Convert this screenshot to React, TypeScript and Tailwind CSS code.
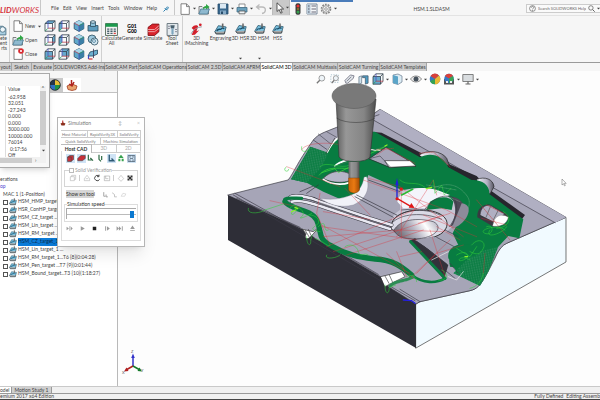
import React from 'react';

const MENUS = ['File', 'Edit', 'View', 'Insert', 'Tools', 'Window', 'Help'];

const RIBBON_TABS = [
    { label: 'yout', width: 'w-[12px]' },
    { label: 'Sketch', width: 'w-[20px]' },
    { label: 'Evaluate', width: 'w-[22px]' },
    { label: 'SOLIDWORKS Add-Ins', width: 'w-[51px]' },
    { label: 'SolidCAM Part', width: 'w-[34px]' },
    { label: 'SolidCAM Operations', width: 'w-[48px]' },
    { label: 'SolidCAM 2.5D', width: 'w-[36px]' },
    { label: 'SolidCAM AFRM', width: 'w-[38px]' },
    { label: 'SolidCAM 3D', width: 'w-[32px]', active: true },
    { label: 'SolidCAM Multiaxis', width: 'w-[45px]' },
    { label: 'SolidCAM Turning', width: 'w-[42px]' },
    { label: 'SolidCAM Templates', width: 'w-[47px]' },
];

const VALUES = ['-62.958', '32.051', '-27.243', '0.000', '0.000', '3000.000', '10000.000', '76014', '0:17:56', 'Off'];

const OPERATIONS = [
    'HSM_HMP_target ...T3',
    'HSR_ConHP_target ...',
    'HSM_CZ_target ...T3',
    'HSM_Lin_target ...T3',
    'HSM_RM_target ...T4',
    'HSM_CZ_target_1 ...',
    'HSM_Lin_target_1 ...',
    'HSM_RM_target_1...T6 {8}(0:04:28)',
    'HSM_Pen_target ...T7 {9}(0:01:44)',
    'HSM_Bound_target...T3 {10}(1:18:27)',
];

interface IconProps {
    className?: string;
    children: React.ReactNode;
}

// Every small icon is drawn on a 12 x 12 grid
const Icon: React.FC<IconProps> = ({ className = 'size-3', children }) => (
    <svg viewBox="0 0 12 12" className={`${className} shrink-0`} fill="none" strokeWidth="0.8" aria-hidden="true">
        {children}
    </svg>
);

const Caret = () => (
    <svg viewBox="0 0 3 3" className="size-[3px] shrink-0" aria-hidden="true">
        <path d="M0 .8h3L1.5 2.4z" fill="#444" />
    </svg>
);

const PageIcon = ({ badge = false }: { badge?: boolean }) => (
    <Icon>
        <path d="M2 .8h5.5l2.8 2.8v7.8H2z" fill="#fff" stroke="#666" />
        <path d="M7.5.8v2.8h2.8" stroke="#666" />
        {badge && (
            <>
                <circle cx="9" cy="3" r="2.8" fill="#d8262c" />
                <path d="M7.9 1.9l2.2 2.2M10.1 1.9L7.9 4.1" stroke="#fff" />
            </>
        )}
    </Icon>
);

const FolderIcon = () => (
    <Icon>
        <path d="M1 3.5h3l1 1h5.5V11H1z" fill="#e9edf0" stroke="#666" />
        <path d="M.8 11l2-5h8.6l-1.8 5z" fill="#8fb9cf" stroke="#4c7c96" />
        <path d="M5 7c0-3 1-4 3-4V1l3.6 3L8 6.6V5C6.500 5 6 5.600 5 7z" fill="#2fa745" />
    </Icon>
);

const SaveIcon = () => (
    <Icon>
        <path d="M1 1h10v10H1z" fill="#39688e" stroke="#274c6b" />
        <path d="M3 1h6v4.500H3z" fill="#dbe9f3" />
        <path d="M3 7.500h6V11H3z" fill="#86abc7" />
        <path d="M4 8.500h2V11H4z" fill="#274c6b" />
    </Icon>
);

const PrintIcon = () => (
    <Icon>
        <path d="M3 1h6v4H3z" fill="#fff" stroke="#777" />
        <path d="M1 4.500h10V9H1z" fill="#6aa1bd" stroke="#446f86" />
        <path d="M3 8h6v2.800H3z" fill="#eef4f7" stroke="#555" />
    </Icon>
);

const UndoIcon = () => (
    <Icon>
        <path d="M4.500 1.500L1.500 4l3 2.500M2 4h5c4.500 0 4.500 5.500 0 6.500" stroke="#bbb" strokeWidth="1.3" />
    </Icon>
);

const PointerIcon = () => (
    <Icon>
        <path d="M3 .8v8.700l2.200-2 1.500 3.700 1.500-.7-1.600-3.500h3z" fill="#fff" stroke="#333" />
    </Icon>
);

const TrafficIcon = () => (
    <Icon>
        <rect x="3.500" y=".3" width="5" height="11.400" rx="2" fill="#3c3c3c" />
        <circle cx="6" cy="3" r="1.500" fill="#e33" />
        <circle cx="6" cy="6" r="1.200" fill="#84722c" />
        <circle cx="6" cy="9" r="1.500" fill="#35a04d" />
    </Icon>
);

const ListIcon = () => (
    <Icon>
        <path d="M1 1h10v10H1z" fill="#f4f6f8" stroke="#5f7285" />
        <path d="M1 1h3.500v10H1z" fill="#b9cbd9" />
        <path d="M5.500 3h4.500M5.500 6h4.500M5.500 9h4.500M2 3h1.500M2 6h1.500M2 9h1.500" stroke="#445" />
    </Icon>
);

const GearIcon = () => (
    <Icon>
        <circle cx="6" cy="6" r="4.500" stroke="#888" strokeWidth="1.600" strokeDasharray="1.800 1" />
        <circle cx="6" cy="6" r="3.300" fill="#f2f2f2" stroke="#888" />
        <circle cx="6" cy="6" r="1.300" fill="#fff" stroke="#888" />
    </Icon>
);

type CubeKind = 'front' | 'back' | 'top' | 'right' | 'left' | 'iso';

const FACES: Record<Exclude<CubeKind, 'iso'>, string> = {
    top: 'M1 3.500L4 .8h7L8.500 3.500z',
    front: 'M1 3.500h7.500v7.700H1z',
    back: 'M4 .8h7v7.400H4z',
    right: 'M8.500 3.500L11 .8v7.400l-2.500 3z',
    left: 'M1 3.500L4 .8v7.400l-3 3z',
};

const CubeIcon = ({ kind }: { kind: CubeKind }) => {
    if (kind === 'iso') {
        return (
            <Icon>
                <path d="M6 .6l4.800 2.500v5.700L6 11.400 1.200 8.800V3.100z" fill="#5fa8cc" stroke="#2b4f63" />
                <path d="M6 .6l4.800 2.500L6 5.600 1.200 3.100z" fill="#a7d5ea" />
                <path d="M6 5.600l4.800-2.500v5.700L6 11.400z" fill="#3b7fa6" />
                <path d="M6 5.600v5.800" stroke="#4b4fbd" />
                <path d="M6 5.600L1.200 3.100" stroke="#b23c4b" />
                <path d="M6 5.600l4.800-2.500" stroke="#2e8c5c" />
            </Icon>
        );
    }
    return (
        <Icon>
            <path d="M1 3.500L4 .8h7v7.400l-2.500 3H1z" fill="#f7fafc" />
            <path d={FACES[kind]} fill="#66a9cc" />
            <path d="M1 3.500L4 .8h7v7.400l-2.500 3H1zM1 3.500h7.500v7.700M8.500 3.500L11 .8" stroke="#33414c" />
            <path d="M4 .8v7.400" stroke="#4b4fbd" />
            <path d="M4 8.200h7" stroke="#c0404c" />
            <path d="M4 8.200l-3 3" stroke="#2e9c5c" />
        </Icon>
    );
};

const CylinderIcon = () => (
    <Icon>
        <path d="M1 5.500h10V11H1z" fill="#5c9dbf" stroke="#2c4c5e" />
        <path d="M3.500 2v4.500h5V2z" fill="#8cc2dc" stroke="#2c4c5e" />
        <ellipse cx="6" cy="2" rx="2.500" ry="1.300" fill="#cbe6f2" stroke="#2c4c5e" />
    </Icon>
);

const SphereIcon = () => (
    <Icon>
        <circle cx="5" cy="5" r="4" fill="#9cc8dd" stroke="#2c4c5e" />
        <circle cx="7.500" cy="7.500" r="3.500" fill="#d7eaf3" stroke="#2c4c5e" />
        <circle cx="7" cy="7" r="1.500" stroke="#4d7f9a" />
    </Icon>
);

const PlaneIcon = () => (
    <Icon>
        <path d="M3 4l7.500-2v4L6 8H1z" fill="#6cb0d0" stroke="#244b60" />
        <path d="M6.500.8V10" stroke="#335" />
        <path d="M1.500 11V7.500" stroke="#3148c9" strokeWidth="1.200" />
        <path d="M1.500 11h4" stroke="#d22f2f" strokeWidth="1.200" />
    </Icon>
);

const CUBES: CubeKind[][] = [
    ['top', 'left', 'iso'],
    ['right', 'left', 'iso'],
    ['front', 'back', 'iso'],
];

const CalcIcon = () => (
    <Icon className="size-[13px]">
        <path d="M.5.5h11v11H.5z" fill="#f4f4f4" stroke="#49604f" />
        <path d="M.5.500h11v3H.5z" fill="#1c9a4d" />
        <path d="M2 5h2v1.200H2zM5 5h2v1.200H5zM8 5h2v1.200H8zM2 7h2v1.200H2zM5 7h2v1.200H5zM8 7h2v1.200H8zM2 9h2v1.200H2zM5 9h2v1.200H5z" fill="#48606a" />
        <path d="M8 9h2v1.200H8z" fill="#d44" />
    </Icon>
);

const BoxIcon = () => (
    <Icon className="size-[13px]">
        <path d="M1 4l4-3h6v7l-4 3.500H1z" fill="#d9242c" stroke="#7c1015" />
        <path d="M1 6h6l4-3.500M1 8h6l4-3" stroke="#f4b6b8" />
    </Icon>
);

const ToolSheetIcon = () => (
    <Icon className="size-[13px]">
        <path d="M1 .5h10v11H1z" fill="#e5ebef" stroke="#5c6a73" />
        <path d="M4 2h4l-.5 3h-3z" fill="#49606e" />
        <path d="M5 5h2v5l-1 1-1-1z" fill="#7da6bf" />
        <path d="M2 3h1.500M2 5h1.500M8.500 6H10M8.500 8H10" stroke="#667" />
    </Icon>
);

const IMachiningIcon = () => (
    <Icon className="size-[13px]">
        <path d="M1.500 4.500C4 1 7 2 7.500 3L6 7.500l2.500-.7-4 4L1.500 11l2-4.500z" fill="#d3202b" />
        <circle cx="9.500" cy="1.700" r="1.300" fill="#d3202b" />
        <path d="M1 10c2-4 5-6 10-6.500" stroke="#8e99a3" />
    </Icon>
);

const MillIcon = ({ className = 'size-3' }: { className?: string }) => (
    <Icon className={className}>
        <path d="M.8 8L4 2.500l7.200 1.200L9.500 10H2z" fill="#7cc2e0" stroke="#2c5970" />
        <path d="M2.500 7.500c1.500-3 3-1 4-2s2-1 3 0" stroke="#174b66" strokeWidth="1.200" />
        <path d="M.8 8L2 10h7.500l.5-2.200" fill="#a8a8a8" stroke="#444" />
        <path d="M8 .5v4" stroke="#666" strokeWidth="1.500" />
    </Icon>
);

const TopBar = () => (
    <header className="flex h-4 shrink-0 items-center overflow-hidden border-b border-[#e3e3e3] bg-[#f6f6f6]">
        <div className="flex h-full w-[41px] shrink-0 items-center border-r border-[#c8c8c8] pt-[5px] text-[8px] leading-none text-[#d5323b]">
            <span className="font-bold italic">LID</span>
            <span className="italic">WORKS</span>
        </div>
        <nav className="flex w-[116px] shrink-0 items-center justify-between pt-0.5 pl-[10px]">
            {MENUS.map((menu) => (
                <button key={menu} type="button">{menu}</button>
            ))}
        </nav>
        <div className="flex h-full w-[18px] shrink-0 items-center justify-center border-r border-[#c8c8c8] pt-0.5">
            <Icon className="size-[6px]">
                <path d="M1 11l4-4M3.500 4.500l4 4M5 6l4-4.500 2 2L7 8z" stroke="#2a7fae" strokeWidth="2" />
            </Icon>
        </div>
        <div className="flex shrink-0 items-center gap-[2px] pt-0.5 pl-1">
            <button type="button" aria-label="New document" className="flex items-center gap-[2px]"><PageIcon /><Caret /></button>
            <button type="button" aria-label="Open document" className="flex items-center gap-[2px]"><FolderIcon /><Caret /></button>
            <button type="button" aria-label="Save" className="flex items-center gap-[2px]"><SaveIcon /><Caret /></button>
            <button type="button" aria-label="Print" className="flex items-center gap-[2px]"><PrintIcon /><Caret /></button>
            <button type="button" aria-label="Undo" className="flex items-center gap-[2px]"><UndoIcon /><Caret /></button>
        </div>
        <button type="button" aria-label="Select" className="flex h-full w-[18px] shrink-0 items-center justify-center border-x border-[#bbb] bg-[#c9c9c9]"><PointerIcon /><Caret /></button>
        <div className="flex shrink-0 items-center gap-[2px] pt-0.5 pl-[2px]">
            <button type="button" aria-label="Rebuild"><TrafficIcon /></button>
            <button type="button" aria-label="File properties"><ListIcon /></button>
            <button type="button" aria-label="Options" className="flex items-center gap-[2px]"><GearIcon /><Caret /></button>
        </div>
        <div className="flex h-full min-w-0 flex-1 flex-col">
            <span className="-ml-[46px] h-[2px] w-[62px] bg-[#4a7cba]" />
            <span className="pt-[4px] text-center">HSM.1.SLDASM</span>
        </div>
        <label className="mt-0.5 flex h-[9px] w-[74px] shrink-0 items-center gap-[2px] border border-r-0 border-[#ccc] bg-[#fafafa] pl-[2px] text-[4px]">
            <Icon className="size-[7px]">
                <circle cx="6" cy="6" r="5" stroke="#666" strokeWidth="1.200" />
                <path d="M4 4.500c0-2.500 4-2.500 4 0C8 6 6 6 6 7.500M6 8.500V10" stroke="#666" strokeWidth="1.200" />
            </Icon>
            <input aria-label="Search" placeholder="Search SOLIDWORKS Help" className="min-w-0 flex-1 bg-transparent outline-none placeholder:text-[#666]" />
            <Icon className="size-[7px]">
                <circle cx="5" cy="5" r="3.800" stroke="#555" strokeWidth="1.200" />
                <path d="M8 8l3.500 3.500" stroke="#555" strokeWidth="1.600" />
            </Icon>
            <Caret />
        </label>
    </header>
);

interface RibbonButtonProps {
    width: string;
    lines: string[];
    children: React.ReactNode;
}

const RibbonButton: React.FC<RibbonButtonProps> = ({ width, lines, children }) => (
    <button type="button" className={`flex ${width} shrink-0 flex-col items-center`}>
        <span className="flex h-[14px] items-center">{children}</span>
        {lines.map((line) => (
            <span key={line} className="h-[5px] leading-[5px] whitespace-nowrap">{line}</span>
        ))}
    </button>
);

const Ribbon = () => (
    <div className="flex h-[46px] shrink-0 overflow-hidden bg-[#f6f6f6]">
        <button type="button" className="flex w-[10px] shrink-0 flex-col items-end border-r border-[#d0d0d0] pt-[7px] pr-[2px]">
            <Icon className="size-[13px]">
                <path d="M1 3h7l3 2v6H1z" fill="#a9cfe2" stroke="#4b6f83" />
                <circle cx="8" cy="6" r="2.500" fill="#eef6fa" stroke="#4b6f83" />
            </Icon>
            <span className="h-[5px] leading-[5px]">ete</span>
            <span className="h-[5px] leading-[5px]">ent</span>
            <span className="h-[5px] leading-[5px]">rts</span>
        </button>
        <div className="flex w-[34px] shrink-0 flex-col gap-[2px] pt-[4px] pl-[2px]">
            <button type="button" className="flex items-center gap-px"><PageIcon /><span className="w-[12px] text-left">New</span><Caret /></button>
            <button type="button" className="flex items-center gap-px"><FolderIcon />Open</button>
            <button type="button" className="flex items-center gap-px"><PageIcon badge />Close</button>
        </div>
        <div className="grid w-[58px] shrink-0 grid-cols-4 content-start gap-y-[2px] border-r border-[#d0d0d0] pt-[4px]">
            {CUBES.map((row, r) => (
                <React.Fragment key={r}>
                    {row.map((kind, c) => (
                        <button key={c} type="button" aria-label={`View ${kind}`}><CubeIcon kind={kind} /></button>
                    ))}
                    <button type="button" aria-label="Section view">
                        {r === 0 ? <CylinderIcon /> : r === 1 ? <SphereIcon /> : <PlaneIcon />}
                    </button>
                </React.Fragment>
            ))}
        </div>
        <div className="flex w-[81px] shrink-0 border-r border-[#d0d0d0] pt-[6px]">
            <RibbonButton width="w-[19px]" lines={['Calculate', 'All']}><CalcIcon /></RibbonButton>
            <RibbonButton width="w-[22px]" lines={['Generate']}>
                <span className="text-[5px] leading-[5px] font-black text-black">G01<br />G00</span>
            </RibbonButton>
            <RibbonButton width="w-[20px]" lines={['Simulate']}><BoxIcon /></RibbonButton>
            <RibbonButton width="w-[18px]" lines={['Tool', 'Sheet']}><ToolSheetIcon /></RibbonButton>
        </div>
        <div className="flex pt-[6px]">
            <RibbonButton width="w-[27px]" lines={['3D', 'iMachining']}><IMachiningIcon /></RibbonButton>
            <RibbonButton width="w-[21px]" lines={['Engraving']}><MillIcon className="size-[13px]" /></RibbonButton>
            <div className="flex flex-col items-center justify-between pb-[2px]">
                <RibbonButton width="w-[19px]" lines={['3D HSR']}><MillIcon /></RibbonButton>
                <Caret />
            </div>
            <div className="flex flex-col items-center justify-between pb-[2px]">
                <RibbonButton width="w-[19px]" lines={['3D HSM']}><MillIcon /></RibbonButton>
                <Caret />
            </div>
            <RibbonButton width="w-[17px]" lines={['HSS']}><MillIcon /></RibbonButton>
        </div>
    </div>
);

const RibbonTabs = () => (
    <div className="flex h-[9px] shrink-0 overflow-hidden border-t border-[#9a9a9a] bg-[#f6f6f6]">
        {RIBBON_TABS.map((tab) => (
            <button
                key={tab.label}
                type="button"
                className={`${tab.width} shrink-0 border-r border-[#a5a5a5] whitespace-nowrap ${tab.active ? 'bg-white text-black' : 'bg-[#cecece]'}`}
            >
                {tab.label}
            </button>
        ))}
    </div>
);

const FeatureTree = () => (
    <aside className="flex w-[118px] shrink-0 flex-col overflow-hidden border-r border-[#b9b9b9] bg-white">
        <div className="flex h-[22px] shrink-0 items-end border-b border-[#c2c2c2] bg-[#f6f6f6] pl-[46px]">
            <button type="button" aria-label="Appearances" className="flex h-[14px] w-[17px] items-center justify-center bg-[#c9c9c9]">
                <Icon>
                    <circle cx="6" cy="6" r="5.300" fill="#2f6fc4" />
                    <path d="M6 6V.7A5.300 5.300 0 0 1 11.300 6z" fill="#e7bd33" />
                    <path d="M6 6h5.300A5.300 5.300 0 0 1 6 11.300z" fill="#1f9245" />
                    <path d="M6 6H.7A5.300 5.300 0 0 1 6 .7z" fill="#27364a" />
                    <circle cx="6" cy="6" r="5.300" stroke="#222" />
                </Icon>
            </button>
            <button type="button" aria-label="SolidCAM manager" className="flex h-[14px] w-[18px] items-center justify-center bg-white">
                <Icon>
                    <path d="M1 7l5-2 5 2-1 3.500-4 1-4-1z" fill="#e7a26c" stroke="#a33c20" />
                    <path d="M5.500 1v5M8 3L6 7 3 5" stroke="#b0221c" strokeWidth="1.500" />
                </Icon>
            </button>
        </div>
        <div className="flex flex-col pt-[82px] whitespace-nowrap">
            <span className="h-[8px] leading-[8px]">erations</span>
            <span className="h-[7px] leading-[7px] text-[#4b3fd0]">op</span>
            <span className="h-[8px] pl-[3px] leading-[8px]">MAC 1 (1-Position)</span>
            <ul className="flex h-[75px] flex-col pl-[3px]">
                {OPERATIONS.map((name, i) => (
                    <li key={name} className="flex-1">
                        <label className="flex h-full items-center">
                            <input type="checkbox" className="size-[5px] shrink-0 appearance-none border border-[#555] bg-white" />
                            <MillIcon className="ml-px size-[8px]" />
                            <span className={`ml-px h-full ${i === 5 ? 'w-[44px] bg-[#0b7bd8] text-[#0a2c4d]' : ''}`}>{name}</span>
                        </label>
                    </li>
                ))}
            </ul>
        </div>
    </aside>
);

// Coordinates are window units; the part itself is drawn at three times that scale
const PartView = () => (
    <svg viewBox="118 71 482 315" preserveAspectRatio="xMidYMid slice" className="absolute inset-0 size-full" role="img" aria-label="Machined part">
        <defs>
            <linearGradient id="holder" x1="0" x2="1">
                <stop offset="0" stopColor="#5e5e5e" />
                <stop offset=".25" stopColor="#979797" />
                <stop offset=".7" stopColor="#858585" />
                <stop offset="1" stopColor="#4c4c4c" />
            </linearGradient>
            <linearGradient id="cutter" x1="0" x2="1">
                <stop offset="0" stopColor="#c96309" />
                <stop offset=".5" stopColor="#ea7a12" />
                <stop offset="1" stopColor="#a34a02" />
            </linearGradient>
            <linearGradient id="bowl" x1="0" x2="1" y1=".3" y2="0">
                <stop offset="0" stopColor="#77757f" />
                <stop offset=".35" stopColor="#b5b4c2" />
                <stop offset=".65" stopColor="#ffffff" />
                <stop offset="1" stopColor="#a5a4b3" />
            </linearGradient>
            <linearGradient id="wall" x1="0" x2="1">
                <stop offset="0" stopColor="#f4f4fa" />
                <stop offset=".6" stopColor="#b2b1c2" />
                <stop offset="1" stopColor="#55535f" />
            </linearGradient>
            <pattern id="hatch" width="5" height="5" patternUnits="userSpaceOnUse" patternTransform="rotate(8)">
                <rect width="5" height="5" fill="#087c41" />
                <path d="M0 2h3" stroke="#7fae9a" strokeWidth="1" />
            </pattern>
        </defs>
        <g transform="translate(290 130) scale(.33333)" fill="none" strokeLinejoin="round" strokeLinecap="round">
            <path d="M-186 195L-186 330 378 654V522L295 468C288 445 275 448 272 440L75 325C65 305 45 303 38 298z" fill="#2e2e37" />
            <path d="M378 522L390 515 540 482C575 475 590 430 615 385C630 350 635 348 650 340L828 262V396L378 654z" fill="#f1faff" stroke="#333" strokeWidth="2" />
            <path d="M-186 195L-6 150C8 135 20 100 70 30C85 12 100 8 140 -8L245 -45 270 -62 828 262 650 340C625 350 610 395 590 430C570 470 560 477 540 482L390 515 378 522 295 470 272 440 75 325 38 298z" fill="#a6a5b7" stroke="#34333c" strokeWidth="2" />
            <path d="M245 -35L270 -62 828 262 795 278 250 -30z" fill="#b0afc2" />
            <path d="M250 -30L795 278M245 -38l22-8M70 30l40 28M-170 195L375 512M-165 190L60 315M95 333l170 100M330 478l60 37M440 400l55 45M-160 205L30 292" stroke="#3b3a45" strokeWidth="2" />
            <path d="M110 5L145 25M85 12l50 40" stroke="#4c4b58" strokeWidth="2" />

            {/* far pocket walls */}
            <path d="M245 5L275 8 405 75 460 95 560 138 600 180 705 255 690 275 590 215 545 170 470 120 400 100 260 35z" fill="#27262d" />
            <path d="M388 75C410 58 455 62 470 85L478 105 440 115z" fill="url(#wall)" stroke="#222" strokeWidth="2" />
            <path d="M560 148C585 138 610 148 612 170L600 192 570 180z" fill="url(#wall)" stroke="#222" strokeWidth="2" />

            {/* roughing pass */}
            <path d="M108 68C130 30 150 8 200 5L255 5 390 82C420 65 460 75 475 112L545 150C575 148 600 165 598 192L700 268 688 325 655 318 625 350 590 380 550 420 480 410 475 375 505 345 488 310 510 265 495 225 450 205 405 185 330 178 235 135 225 165 200 195 150 207 100 185 50 158 3 148 60 50z" fill="#087c41" />
            <path d="M3 148L62 50 115 68 95 112 50 158z" fill="url(#hatch)" />
            <path d="M550 370L625 350 595 425 570 468 490 430z" fill="url(#hatch)" />
            <path d="M112 66C128 32 150 12 185 8" stroke="#fff" strokeWidth="5" />
            <path d="M108 70L134 25" stroke="#333" strokeWidth="2" />

            {/* small island next to the cutter */}
            <path d="M100 145C125 118 165 118 192 140C190 158 130 165 100 145z" fill="#b6b5c8" stroke="#333" strokeWidth="2" />
            <path d="M100 148C130 168 175 166 192 148" stroke="#fff" strokeWidth="5" />
            <path d="M135 108C150 90 190 90 205 75C225 55 255 60 270 60" stroke="#fff" strokeWidth="5" />
            <path d="M132 112C150 95 195 98 210 80M230 66L285 50" stroke="#2b7d4e" strokeWidth="3" />
            <path d="M88 135C120 95 180 130 195 105C215 75 250 70 288 48M95 128l40-12 10 12 40-20" stroke="#3fe03c" strokeWidth="2" />

            {/* rectangular island */}
            <path d="M238 86L288 52 345 85 378 108 300 112z" fill="#a6a5b8" stroke="#26252c" strokeWidth="2" />
            <path d="M285 92L360 92 378 108 298 112z" fill="#fff" stroke="#333" strokeWidth="2" />
            <path d="M238 86L270 78 300 110" stroke="#4a4955" strokeWidth="2" />

            {/* right island */}
            <path d="M562 262C560 235 580 222 600 224L650 252C668 265 640 292 610 290z" fill="#3a3942" />
            <path d="M570 255C572 232 585 224 600 226L645 252 610 275z" fill="#b0afc2" stroke="#333" strokeWidth="2" />
            <path d="M612 272C618 255 640 250 655 262C650 285 625 292 608 288z" fill="#fff" stroke="#777" />
            <path d="M602 228l-14 34M625 240l-15 30" stroke="#555" strokeWidth="2" />

            {/* centre bowl */}
            <path d="M330 185C390 160 470 180 500 225C515 260 490 290 470 305L400 320 310 300C300 270 305 255 330 240z" fill="#c5c4d4" />
            <path d="M322 215C325 180 400 160 455 185L480 195 440 210 410 235 340 235z" fill="#f4f4fb" />
            <path d="M420 215C450 195 480 200 490 215L485 240 455 235 408 240z" fill="#087c41" />
            <path d="M485 200C535 205 540 270 480 290C500 260 500 230 485 200z" fill="#4c4856" />
            <path d="M515 220C560 225 525 290 485 295z" fill="#8d8b9b" />
            <path d="M303 295C300 262 340 238 400 240C455 242 485 270 465 300C440 335 340 340 303 295z" fill="#dadae6" stroke="#333" strokeWidth="3" />
            <path d="M312 300C330 268 380 262 430 275C460 290 440 318 395 325C355 330 320 325 312 300z" fill="url(#bowl)" stroke="#44434e" strokeWidth="2" />
            <path d="M310 270C330 240 400 230 450 255M305 280C330 250 400 245 455 268M405 238C430 200 470 190 492 205C510 230 495 270 478 290M335 240L380 236" stroke="#3a3944" strokeWidth="2" />

            {/* rib running across the part */}
            <path d="M0 202C10 192 60 200 90 215L240 265 305 285M5 215C40 205 90 230 240 278L300 297" stroke="#33323b" strokeWidth="11" />
            <path d="M0 202C10 192 60 200 90 215L240 265 305 285M5 215C40 205 90 230 240 278L300 297" stroke="#e9e9f2" strokeWidth="8" />
            <path d="M20 203C60 205 100 222 240 271L304 291" stroke="#55545f" strokeWidth="2" />
            <path d="M230 140C240 175 232 205 190 225C150 235 120 225 90 205C130 212 165 205 195 190C215 175 220 155 222 142z" fill="#f1f1f8" stroke="#77768a" />
            <path d="M200 195L320 255M195 200L310 262M235 150L330 185M50 190L85 165M30 185L70 168" stroke="#34333d" strokeWidth="2" />

            {/* V groove */}
            <path d="M358 332L375 325 475 405 462 448z" fill="#33323b" />
            <path d="M375 330L475 395 500 360 430 320z" fill="#9f9eb0" />
            <path d="M382 335L470 402M440 322l60 32M465 300l40 20M480 400l25 30" stroke="#3b3a45" strokeWidth="2" />
            <path d="M475 385C470 355 500 335 540 345L570 360C570 385 540 372 515 395L500 425z" fill="#087c41" />
            <path d="M425 390l50-25M475 440l25 10 20-25" stroke="#eee" strokeWidth="2" />

            {/* near-edge notches */}
            <path d="M38 298L70 305 90 290 60 322C50 330 42 325 48 312z" fill="#fff" stroke="#333" strokeWidth="2" />
            <path d="M45 300l12 20M55 298l8 18" stroke="#444" strokeWidth="2" />
            <path d="M272 440L335 425 345 440 300 462 285 470z" fill="#fff" stroke="#333" strokeWidth="2" />
            <path d="M285 438l12 22M298 435l10 22" stroke="#444" strokeWidth="2" />

            {/* finishing pass along the near edge */}
            <path d="M-15 215C0 240 60 235 80 270C98 310 80 325 125 348C175 378 215 382 255 387C310 390 335 410 365 435" stroke="#087c41" strokeWidth="16" />
            <path d="M-15 215C-25 200 10 205 35 205" stroke="#087c41" strokeWidth="10" />
            <path d="M365 435C400 462 440 460 465 445" stroke="#087c41" strokeWidth="8" />
            <path d="M465 445L362 335" stroke="#087c41" strokeWidth="9" />
            <path d="M300 468C320 450 345 455 370 440" stroke="#2c8d55" strokeWidth="9" strokeDasharray="3 1" />

            {/* rapid moves */}
            <path d="M35 60C40 38 120 35 150 45M-10 110L150 170M260 75L290 55 375 100M-60 212L30 232M90 190L80 250 120 345M95 285L360 430M95 290L380 330M100 320L330 300 460 305M110 350L420 220M130 365L300 310 480 250M170 375L400 300M290 370L370 445M330 380L395 365M220 150L470 240 560 290M235 145L330 170 520 320M320 320L430 150 440 195M350 440L320 365M365 440L480 330M380 430L440 370 520 345M334 185V325M585 370L580 430M400 255L560 320M440 290L510 330M575 265L650 285M385 280L460 255M465 440L420 300M100 245L240 268M240 255L165 175" stroke="#dd3038" strokeWidth="2" strokeOpacity=".55" />
            <path d="M388 70L430 66 480 110M590 225L640 250M260 60L310 55M560 210L660 330" stroke="#c43a3a" strokeWidth="2" strokeDasharray="4 3" strokeOpacity=".8" />

            {/* lead-in and lead-out moves */}
            <path d="M-125 235C-130 255-90 250-75 240L-20 222M35 50C30 72 55 65 60 55M-12 112a6 6 0 1 0 8 6M0 235c10-15 25-10 20 5s-25 20-10 0 40 10 25 20 15 0 30-10M60 255c20 0 35 20 20 30s-20 15 10 20M50 320c0 30 15 30 12 10l5-15M75 325c30 10 40 30 45 20M110 375c-10 15 30 10 40 0M165 350c15-10 35-5 40 15s20 0 30 10M85 290c30-30 10 20 30 10M285 465c0 35 15 25 12 8l20-8M350 440c15-10 30 0 30 15M455 420c25 10 15 35-10 30M500 375c30-20 45 5 20 15s-10-20 20 0M545 345c20-25 45-10 35 10s-20 20-40 10M590 290c25-10 20 30-5 20s40-30 60-10M640 245c35 20 10 50-20 50M330 150c20 20 50 0 75 22M430 150l5 40 20-25 8 30 20-20M90 110c20-20 60 10 90-5M600 300c-20 30 40 10 50-10M540 475c20-5 35-20 40-45M500 355l40 25 20-30" stroke="#32d23a" strokeWidth="2" strokeOpacity=".8" />
            <path d="M430 175c40-20 70-10 90 10s20 30 15 50M410 165l90 15M440 185l70 30" stroke="#a0c8a8" strokeWidth="1" strokeDasharray="1 3" />
            <path d="M5 245l12-5M15 232l8 4M525 380l8 0M285 48l6-3M425 172l-16 4" stroke="#8df02a" strokeWidth="4" />
            <path d="M340 510l25 2 10 8" stroke="#241fe0" strokeWidth="4" />

            {/* machine origin */}
            <path d="M321 205V160" stroke="#2020d8" strokeWidth="4" />
            <path d="M316 166l5-22 5 22z" fill="#2020d8" />
            <path d="M321 205L362 229" stroke="#e01818" strokeWidth="4" />
            <path d="M356 233l18 1-10-15z" fill="#e01818" />
            <path d="M335 195L368 178" stroke="#2bb832" strokeWidth="5" />
            <circle cx="321" cy="206" r="4.500" fill="#e01818" />
            <path d="M329 173h9v9h-9z" fill="#e01818" />
        </g>

        {/* tool holder */}
        <path d="M336 99L339 157C343 163 367 163 370 157L376 99z" fill="url(#holder)" stroke="#333" strokeWidth=".6" />
        <path d="M336.500 118C345 124 367 124 375 118" fill="none" stroke="#333" strokeWidth=".5" />
        <ellipse cx="354" cy="96" rx="22" ry="12.500" fill="#797979" stroke="#555" strokeWidth=".5" />
        <path d="M348.500 162h11v16h-11z" fill="url(#holder)" />
        <path d="M348.500 178h11v12c-2 4-9 4-11 0z" fill="url(#cutter)" stroke="#703300" strokeWidth=".4" />

        {/* triad */}
        <g fill="none" strokeWidth="1.500">
            <path d="M133 366V357" stroke="#3232c8" />
            <path d="M131.200 358l1.800-4.500 1.800 4.500z" fill="#3232c8" />
            <path d="M133 366l-7 4" stroke="#b02020" />
            <path d="M126.500 367.500l-2.500 4 4.500-.5z" fill="#b02020" />
            <path d="M133 366l7 4" stroke="#157a2a" />
            <path d="M139.500 367.500l2.500 4-4.500-.5z" fill="#157a2a" />
        </g>
        <g fontSize="4" fill="#555">
            <text x="131" y="353">Z</text>
            <text x="122" y="374">X</text>
            <text x="141" y="372">Y</text>
        </g>
        <path d="M562 179v6l1.500-1.300 1 2.200.8-.4-1-2.100h1.900z" fill="#fff" stroke="#666" strokeWidth=".5" />
    </svg>
);

const ViewToolbar = () => (
    <div className="absolute top-[2px] left-[198px] flex items-center">
        <button type="button" aria-label="Zoom to fit" className="w-[14px]">
            <Icon className="size-[10px]"><circle cx="7" cy="5" r="3.500" fill="#eef4f8" stroke="#777" /><path d="M4.500 7.500L1 11" stroke="#777" strokeWidth="1.600" /></Icon>
        </button>
        <button type="button" aria-label="Zoom to area" className="w-[14px]">
            <Icon className="size-[10px]"><path d="M1 1h9v9H1z" stroke="#8ab" strokeDasharray="1.500 1.500" /><circle cx="7" cy="5" r="3" fill="#eef4f8" stroke="#777" /><path d="M5 7.500L2 11" stroke="#777" strokeWidth="1.500" /></Icon>
        </button>
        <button type="button" aria-label="Previous view" className="w-[14px]">
            <Icon className="size-[11px]"><path d="M2 10L1 7l6-6 4 1-1 3-6 5z" fill="#dfe4e8" stroke="#667" /><path d="M3 8l5-5" stroke="#667" /></Icon>
        </button>
        <button type="button" aria-label="Section view" className="w-[14px]">
            <Icon className="size-[11px]"><path d="M1 3l3-1v8l-3 1z" fill="#cfe2ec" stroke="#678" /><path d="M5 2h6v8l-3 1V4H5z" fill="#4f9dc4" stroke="#456" /></Icon>
        </button>
        <button type="button" aria-label="View orientation" className="flex w-[19px] items-center gap-[2px]"><CubeIcon kind="front" /><Caret /></button>
        <button type="button" aria-label="Display style" className="flex w-[19px] items-center gap-[2px]">
            <Icon><path d="M2 2l5-1 4 2v6l-4 2.500L2 10z" fill="#dcecf4" stroke="#789" /><path d="M2 2l5 1.500v8L2 10z" fill="#5ba4c8" /></Icon><Caret />
        </button>
        <button type="button" aria-label="Hide items" className="flex w-[19px] items-center gap-[2px]">
            <Icon><path d="M.5 6C3 2 9 2 11.500 6 9 10 3 10 .5 6z" fill="#eee" stroke="#777" /><circle cx="6" cy="6" r="2.500" fill="#47525c" /></Icon><Caret />
        </button>
        <button type="button" aria-label="Edit appearance" className="w-[14px]">
            <Icon><circle cx="6" cy="6" r="5.300" fill="#3779c4" /><path d="M6 6L1.500 3A5.300 5.300 0 0 1 10 2.500z" fill="#d9403a" /><path d="M6 6l4-3.500A5.300 5.300 0 0 1 6 11.300z" fill="#e9b934" /><path d="M6 6v5.300A5.300 5.300 0 0 1 1 8z" fill="#35a252" /></Icon>
        </button>
        <button type="button" aria-label="Apply scene" className="flex w-[19px] items-center gap-[2px]">
            <Icon><path d="M1 6h10v5.500H1z" fill="#555" /><circle cx="6" cy="5.500" r="4.700" fill="#3779c4" /><path d="M6 5.500L2 3a4.700 4.700 0 0 1 8 0z" fill="#d9403a" /><path d="M6 5.500L10 3a4.700 4.700 0 0 1-4 7.200z" fill="#3ba356" /><path d="M3 8h2v2H3zM7 8h2v2H7z" fill="#eee" /></Icon><Caret />
        </button>
        <button type="button" aria-label="View settings" className="flex w-[19px] items-center gap-[2px]">
            <Icon><path d="M.8 1.500h10.400v7H.8z" fill="#d9dde0" stroke="#666" /><path d="M6 8.500V11M3.500 11h5" stroke="#666" strokeWidth="1.200" /></Icon><Caret />
        </button>
    </div>
);

const ValuePanel = () => (
    <section className="absolute top-[73px] left-0 flex h-[95px] w-[50px] flex-col border border-l-0 border-[#a9a9a9] bg-[#f8f8f8] pr-[3px] shadow-md">
        <div className="h-[12px] shrink-0" />
        <div className="flex min-h-0 flex-1 bg-white">
            <div className="w-[6px] shrink-0 border-r border-[#ddd]" />
            <div className="flex h-[72px] min-w-0 flex-1 flex-col justify-between pl-[2px]">
                <span className="h-[7px] leading-[7px]">Value</span>
                {VALUES.map((value, i) => (
                    <span key={i} className={`h-[6px] leading-[6px] ${i === 8 ? 'pl-[2px]' : ''}`}>{value}</span>
                ))}
            </div>
            <div className="flex w-[6px] shrink-0 flex-col items-center bg-[#f1f1f1]">
                <span className="h-[5px] leading-[5px]">^</span>
                <span className="h-[54px] w-full bg-[#cdcdcd]" />
                <span className="pt-[4px]"><Caret /></span>
            </div>
        </div>
        <div className="mb-[4px] flex h-[6px] shrink-0 items-center bg-[#f1f1f1]">
            <span className="h-[5px] w-[32px] bg-[#cdcdcd]" />
            <span className="pl-[3px] leading-none">›</span>
        </div>
    </section>
);

interface PlayButtonProps {
    label: string;
    path: string;
}

const PLAYBACK: PlayButtonProps[] = [
    { label: 'Start', path: 'M1 3l4 3-4 3zM6 2h1.500v8H6zM8.500 3l3 3-3 3z' },
    { label: 'Play', path: 'M3 2l7 4-7 4z' },
    { label: 'Stop', path: 'M3 3h6v6H3z' },
    { label: 'Step', path: 'M2 2h1.500v8H2zM5 2l5 4-5 4z' },
    { label: 'Fast forward', path: 'M1 2l4 4-4 4zM5 2l4 4-4 4zM10 2h1.500v8H10z' },
    { label: 'Eject', path: 'M6 1l4 6H2zM2 8.500h8V10H2z' },
];

const SimulationDialog = () => (
    <section className="absolute top-[117px] left-[57px] flex h-[130px] w-[88px] flex-col border border-[#b5b5b5] bg-white text-[#777] shadow-lg">
        <div className="flex h-[10px] shrink-0 items-center gap-[2px] pl-[2px]">
            <Icon className="size-[6px]"><path d="M1 7l5-2 5 2-2 4H3z" fill="#8a2f1c" /><path d="M5.500 1v5" stroke="#b0221c" strokeWidth="2" /></Icon>
            <h2 className="flex-1 text-[5px] leading-none">Simulation</h2>
            <span className="pr-[13px] text-[#999]">↕</span>
            <span className="pr-[4px] text-[#bbb]">×</span>
        </div>
        <div className="mx-[3px] mt-[2px] flex flex-col text-[4px]">
            <div className="grid h-[7px] grid-cols-[27px_30px_1fr]">
                {['Host Material', 'RapidVerify3X', 'SolidVerify'].map((tab) => (
                    <button key={tab} type="button" className="border-t border-r border-[#ccc] whitespace-nowrap">{tab}</button>
                ))}
            </div>
            <div className="grid h-[7px] grid-cols-2">
                {['Quick SolidVerify', 'Machine Simulation'].map((tab) => (
                    <button key={tab} type="button" className="border-t border-r border-[#ccc] whitespace-nowrap">{tab}</button>
                ))}
            </div>
            <div className="grid h-[7px] grid-cols-[31px_1fr_1fr] text-[5px]">
                <button type="button" className="border-t border-r border-[#bbb] font-bold text-[#333]">Host CAD</button>
                <button type="button" className="border-t border-r border-b border-[#ccc] text-[#aaa]">3D</button>
                <button type="button" className="border-t border-r border-b border-[#ccc] text-[#aaa]">2D</button>
            </div>
        </div>
        <div className="mx-[3px] mb-[5px] flex flex-1 flex-col border border-t-0 border-[#ddd] px-[2px]">
            <div className="mt-[2px] flex h-[10px] shrink-0 items-center justify-between px-[2px]">
                <Icon className="size-[9px] bg-[#cfe3f5]"><path d="M2 4l3-2h5v5l-3 3H2z" fill="#c7313a" stroke="#444" /><path d="M2 4h5v6" stroke="#444" /></Icon>
                <Icon className="size-[9px] bg-[#cfe3f5]"><path d="M1 6l4-4h6v4L7 9H1z" fill="#c7313a" stroke="#444" /></Icon>
                <Icon className="size-[8px]"><path d="M2 1v8h5M5 6l4 4" stroke="#2f6b45" strokeWidth="1.800" /></Icon>
                <Icon className="size-[8px]"><path d="M3 1v7l3 3M7 3v6" stroke="#2f6b45" strokeWidth="1.800" /></Icon>
                <Icon className="size-[9px] bg-[#cfe3f5]"><path d="M3 1v8h5M6 6l4 4" stroke="#2d5974" strokeWidth="1.800" /></Icon>
                <Icon className="size-[8px]"><path d="M6 1l4 5H2zM2 7h3v4H2zM7 7h3v4H7z" fill="#38a350" /></Icon>
                <Icon className="size-[9px] bg-[#cfe3f5]"><path d="M1.500 2h9v8h-9zM4 2v3M8 2v3M4 7v3M8 7v3M4 6h4" stroke="#345" /></Icon>
            </div>
            <fieldset className="mt-[4px] h-[20px] shrink-0 border border-[#d5d5d5] px-[4px]">
                <legend className="flex h-[6px] items-center">
                    <input id="verify" type="checkbox" className="size-[5px] appearance-none border border-[#bbb] bg-white" />
                    <label htmlFor="verify" className="pl-px text-[#999]">Solid Verification</label>
                </legend>
                <div className="flex items-center justify-between pt-px">
                    <Icon className="size-[8px]"><path d="M2 4h6v6H2zM4 4V2h6v6H8" stroke="#aaa" /></Icon>
                    <span className="h-[6px] border-l border-[#ccc]" />
                    <Icon className="size-[8px]"><path d="M2 7l4-5 4 5v3H2zM4 7h4" stroke="#aaa" /></Icon>
                    <Icon className="size-[8px]"><path d="M9 3a4 4 0 1 0 1 5M9 1v3H6" stroke="#444" strokeWidth="1.400" /></Icon>
                    <Icon className="size-[8px]"><path d="M2 3h8v7H2zM4 3v4h4" stroke="#999" /></Icon>
                    <span className="h-[6px] border-l border-[#ccc]" />
                    <Icon className="size-[8px]"><path d="M2 7l4-5 4 5-4 4z" stroke="#aaa" /></Icon>
                    <Icon className="size-[6px]"><path d="M1 1h4v4H1zM7 1h4v4H7zM1 7h4v4H1zM7 7h4v4H7zM4 4h4v4H4z" fill="#333" /></Icon>
                </div>
            </fieldset>
            <div className="mt-[3px] flex h-[8px] shrink-0 items-center gap-[2px] pl-[2px]">
                <button type="button" className="mr-[6px] h-[8px] w-[28px] bg-[#d6d6d6] whitespace-nowrap text-[#333]">Show on tool</button>
                <Icon className="size-[7px]"><path d="M3 2v7h3M7 6v4h3" stroke="#999" strokeWidth="1.500" /></Icon>
                <Icon className="size-[7px]"><path d="M2 3l4 3v4h4" stroke="#bbb" strokeWidth="1.500" /></Icon>
                <Icon className="size-[7px]"><path d="M2 9l3-5 5 1-2 4z" stroke="#bbb" /></Icon>
            </div>
            <fieldset className="mt-[3px] h-[21px] shrink-0 border border-[#ddd] px-px">
                <legend className="ml-px h-[6px] text-[#333]"><label htmlFor="speed">Simulation speed</label></legend>
                <div className="mt-px flex h-[11px] items-center border-t border-l border-[#aaa]">
                    <input
                        id="speed"
                        type="range"
                        defaultValue={97}
                        className="h-[8px] w-full appearance-none bg-[linear-gradient(#bbb,#bbb)] bg-[length:100%_1px] bg-center bg-no-repeat [&::-webkit-slider-thumb]:h-[7px] [&::-webkit-slider-thumb]:w-[4px] [&::-webkit-slider-thumb]:appearance-none [&::-webkit-slider-thumb]:bg-[#0b78d0]"
                    />
                </div>
            </fieldset>
            <div className="mt-[3px] flex items-center justify-between px-[2px]">
                {PLAYBACK.map((item) => (
                    <button key={item.label} type="button" aria-label={item.label}>
                        <Icon className="size-[7px]"><path d={item.path} fill={item.label === 'Stop' ? '#222' : '#999'} /></Icon>
                    </button>
                ))}
            </div>
        </div>
    </section>
);

export default function App() {
    return (
        <div className="relative flex h-screen flex-col overflow-hidden bg-white font-[Lato,sans-serif] text-[5px] leading-[7px] text-[#444]">
            <TopBar />
            <Ribbon />
            <RibbonTabs />
            <main className="flex min-h-0 flex-1">
                <FeatureTree />
                <div className="relative flex-1 overflow-hidden bg-[#fdfdfd]">
                    <PartView />
                    <ViewToolbar />
                </div>
            </main>
            <div className="flex h-[7px] shrink-0 border-t border-[#c9c9c9] bg-[#f0f0f0]">
                <button type="button" className="w-[12px] border-r border-[#999] bg-white text-left leading-[6px]">odel</button>
                <button type="button" className="w-[40px] border-r border-[#999] bg-[#cfcfcf] leading-[6px]">Motion Study 1</button>
            </div>
            <footer className="flex h-[7px] shrink-0 gap-[3px] overflow-hidden border-t border-b border-t-[#999] border-b-[#444] bg-[#f0f0f0] leading-[5px] whitespace-nowrap">
                <span className="flex-1">emium 2017 x64 Edition</span>
                <span>Fully Defined</span>
                <span>Editing Assemb</span>
            </footer>
            <ValuePanel />
            <SimulationDialog />
        </div>
    );
}
